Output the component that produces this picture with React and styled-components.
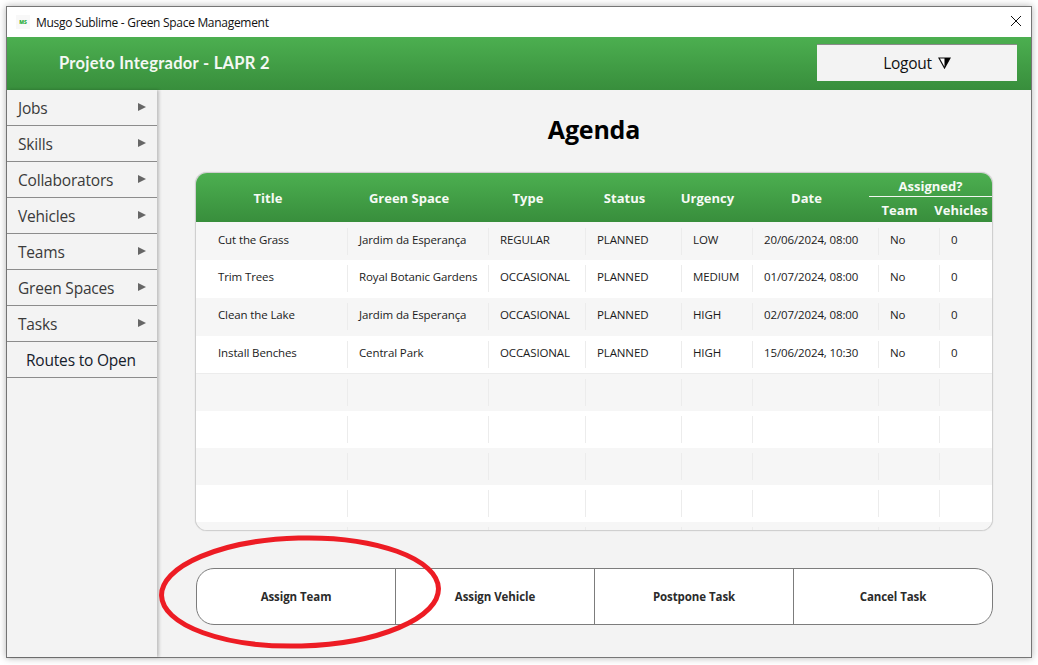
import React from "react";
import styled, { createGlobalStyle } from "styled-components";

const GlobalStyle = createGlobalStyle`
  html, body {
    margin: 0;
    padding: 0;
    background: #fff;
  }
  body {
    font-family: "Open Sans", "Noto Sans", sans-serif;
  }
`;

const Page = styled.div`
  width: 1038px;
  height: 665px;
  padding: 6px;
  box-sizing: border-box;
  overflow: hidden;
`;

const Window = styled.div`
  position: relative;
  width: 1026px;
  height: 652px;
  box-sizing: border-box;
  border: 1px solid #767676;
  box-shadow: 0 0 7px rgba(0, 0, 0, 0.3);
  background: #f3f3f3;
  display: flex;
  flex-direction: column;
`;

const TitleBar = styled.div`
  height: 30px;
  background: #fff;
  display: flex;
  align-items: center;
  padding: 0 9px 0 9px;
  flex: none;
`;

const AppIcon = styled.div`
  width: 14px;
  height: 14px;
  display: flex;
  align-items: center;
  justify-content: center;
  background: #f8f8f8;
  color: #2fae3c;
  font-size: 5px;
  font-weight: 800;
  margin-right: 6px;
`;

const WindowTitle = styled.span`
  font-size: 12px;
  letter-spacing: -0.3px;
  color: #111;
  flex: 1;
`;

const CloseSvg = styled.svg`
  margin-bottom: 2px;
`;

const Header = styled.header`
  height: 53px;
  flex: none;
  display: flex;
  align-items: center;
  justify-content: space-between;
  padding: 0 14px 0 52px;
  background: linear-gradient(#4caf50, #388e3c);
`;

const Brand = styled.h1`
  margin: 0 0 1px;
  font-family: "Lato", sans-serif;
  font-size: 16.5px;
  font-weight: 700;
  letter-spacing: 0.28px;
  color: #f4f8f3;
`;

const LogoutButton = styled.button`
  width: 200px;
  height: 37px;
  margin-top: -3px;
  border: 0;
  border-top: 1px solid #8a8a8a;
  background: #f3f3f3;
  color: #111;
  font-family: inherit;
  font-size: 15.5px;
  letter-spacing: -0.3px;
  display: flex;
  align-items: center;
  justify-content: center;
  gap: 6px;
`;

const Body = styled.div`
  flex: 1;
  display: flex;
  min-height: 0;
`;

const Sidebar = styled.nav`
  width: 150px;
  flex: none;
  background: #f3f3f3;
  box-shadow: 2px 0 3px rgba(0, 0, 0, 0.22);
`;

const MenuRow = styled.div`
  height: 36px;
  box-sizing: border-box;
  border-bottom: 1px solid #8c8c8c;
  display: flex;
  align-items: center;
  justify-content: ${({ $plain }) => ($plain ? "flex-start" : "space-between")};
  padding: ${({ $plain }) => ($plain ? "0 0 0 19px" : "0 11px")};
  font-size: 15.5px;
  letter-spacing: -0.2px;
  color: ${({ $plain }) => ($plain ? "#15202b" : "#3a3a3a")};
`;

const Arrow = styled.span`
  width: 0;
  height: 0;
  margin-bottom: 1px;
  border-left: 8px solid #666;
  border-top: 4px solid transparent;
  border-bottom: 4px solid transparent;
`;

const Content = styled.main`
  flex: 1;
  min-width: 0;
  display: flex;
  flex-direction: column;
  padding: 0 38px 0 38px;
`;

const PageTitle = styled.h2`
  margin: 0;
  height: 82px;
  display: flex;
  align-items: center;
  justify-content: center;
  padding-bottom: 5px;
  box-sizing: border-box;
  font-size: 25px;
  font-weight: 700;
  letter-spacing: -0.2px;
  color: #000;
`;

const Table = styled.div`
  height: 359px;
  box-sizing: border-box;
  border: 1px solid #cfcfcf;
  border-radius: 12px;
  background: #fff;
  box-shadow: 0 0 1px #bdbdbd;
  overflow: hidden;
`;

const COLUMNS = "151px 141px 97px 96px 71px 126px 61px 1fr";

const TableHead = styled.div`
  height: 49px;
  display: grid;
  grid-template-columns: 144px 138px 100px 93px 73px 125px 1fr;
  background: linear-gradient(#4caf50, #388e3c);
  color: #f6faf5;
  font-size: 13px;
  font-weight: 700;
`;

const HeadCell = styled.div`
  display: flex;
  align-items: center;
  justify-content: center;
  padding-top: 1px;
`;

const GroupCell = styled.div`
  display: grid;
  grid-template-columns: 61px 1fr;
  grid-template-rows: 24px 1fr;
`;

const GroupTitle = styled.div`
  grid-column: 1 / -1;
  display: flex;
  align-items: center;
  justify-content: center;
  padding-top: 2px;
  border-bottom: 1px solid #f2f7f1;
`;

const Row = styled.div`
  height: ${({ $height }) => $height}px;
  display: grid;
  grid-template-columns: ${COLUMNS};
  padding-top: ${({ $top }) => $top}px;
  box-sizing: border-box;
  background: ${({ $odd }) => ($odd ? "#f6f6f6" : "#fff")};
  border-bottom: ${({ $divider }) => ($divider ? "1px solid #ececec" : "0")};
  overflow: hidden;
`;

const Cell = styled.div`
  height: 27px;
  display: flex;
  align-items: center;
  box-sizing: border-box;
  padding: 0 0 5px ${({ $first }) => ($first ? 22 : 11)}px;
  border-left: ${({ $first }) => ($first ? "0" : "1px solid #ececec")};
  font-size: 11.5px;
  letter-spacing: -0.12px;
  color: #1b1b1b;
  white-space: nowrap;
`;

const ButtonBar = styled.div`
  margin: 37px 0 0 1px;
  height: 57px;
  box-sizing: border-box;
  display: grid;
  grid-template-columns: 198px 199px 199px 1fr;
  border: 1px solid #7c7c7c;
  border-radius: 18px;
  background: #fff;
  overflow: hidden;
`;

const ActionButton = styled.button`
  border: 0;
  border-left: ${({ $first }) => ($first ? "0" : "1px solid #7c7c7c")};
  background: transparent;
  font-family: inherit;
  font-size: 11.5px;
  font-weight: 700;
  letter-spacing: -0.08px;
  color: #2b2b2b;
  padding: 0;
`;

const Annotation = styled.svg`
  position: absolute;
  left: 138px;
  top: 520px;
  pointer-events: none;
`;

const menu = ["Jobs", "Skills", "Collaborators", "Vehicles", "Teams", "Green Spaces", "Tasks"];

const tasks = [
  ["Cut the Grass", "Jardim da Esperança", "REGULAR", "PLANNED", "LOW", "20/06/2024, 08:00", "No", "0"],
  ["Trim Trees", "Royal Botanic Gardens", "OCCASIONAL", "PLANNED", "MEDIUM", "01/07/2024, 08:00", "No", "0"],
  ["Clean the Lake", "Jardim da Esperança", "OCCASIONAL", "PLANNED", "HIGH", "02/07/2024, 08:00", "No", "0"],
  ["Install Benches", "Central Park", "OCCASIONAL", "PLANNED", "HIGH", "15/06/2024, 10:30", "No", "0"],
];

const rows = [...tasks, ...Array(5).fill(Array(8).fill(""))];

const CloseIcon = () => (
  <CloseSvg width="12" height="12" viewBox="0 0 12 12">
    <path d="M1 1 L11 11 M11 1 L1 11" stroke="#111" strokeWidth="1" fill="none" />
  </CloseSvg>
);

const LogoutGlyph = () => (
  <svg width="13" height="12" viewBox="0 0 13 12">
    <path d="M1 1 H12 L6.5 11 Z" fill="#fff" stroke="#111" strokeWidth="1.2" />
    <path d="M6.5 1 H12 L6.5 11 Z" fill="#000" />
  </svg>
);

export default function App() {
  return (
    <Page>
      <GlobalStyle />
      <Window>
        <TitleBar>
          <AppIcon>MS</AppIcon>
          <WindowTitle>Musgo Sublime - Green Space Management</WindowTitle>
          <CloseIcon />
        </TitleBar>
        <Header>
          <Brand>Projeto Integrador - LAPR 2</Brand>
          <LogoutButton>
            Logout <LogoutGlyph />
          </LogoutButton>
        </Header>
        <Body>
          <Sidebar>
            {menu.map((item) => (
              <MenuRow key={item}>
                {item}
                <Arrow />
              </MenuRow>
            ))}
            <MenuRow $plain>Routes to Open</MenuRow>
          </Sidebar>
          <Content>
            <PageTitle>Agenda</PageTitle>
            <Table>
              <TableHead>
                <HeadCell>Title</HeadCell>
                <HeadCell>Green Space</HeadCell>
                <HeadCell>Type</HeadCell>
                <HeadCell>Status</HeadCell>
                <HeadCell>Urgency</HeadCell>
                <HeadCell>Date</HeadCell>
                <GroupCell>
                  <GroupTitle>Assigned?</GroupTitle>
                  <HeadCell>Team</HeadCell>
                  <HeadCell>Vehicles</HeadCell>
                </GroupCell>
              </TableHead>
              {rows.map((row, i) => (
                <Row
                  key={i}
                  $odd={i % 2 === 0}
                  $height={i < 4 ? 38 : 37}
                  $top={i === 0 ? 6 : 5}
                  $divider={i === tasks.length - 1}
                >
                  {row.map((value, j) => (
                    <Cell key={j} $first={j === 0}>
                      {value}
                    </Cell>
                  ))}
                </Row>
              ))}
            </Table>
            <ButtonBar>
              <ActionButton $first>Assign Team</ActionButton>
              <ActionButton>Assign Vehicle</ActionButton>
              <ActionButton>Postpone Task</ActionButton>
              <ActionButton>Cancel Task</ActionButton>
            </ButtonBar>
          </Content>
        </Body>
        <Annotation width="310" height="125" viewBox="0 0 310 125">
          <ellipse cx="155" cy="65" rx="138.5" ry="54" fill="none" stroke="#ed1c24" strokeWidth="5" transform="rotate(-1.5 155 65)" />
        </Annotation>
      </Window>
    </Page>
  );
}
